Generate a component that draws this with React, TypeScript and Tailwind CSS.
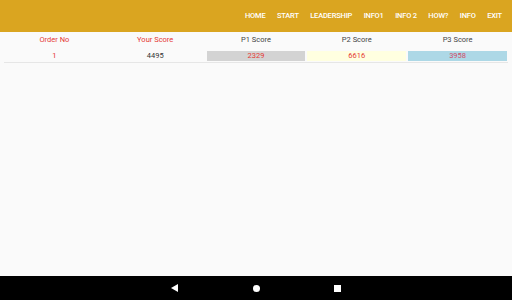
export default function App() {
  const links = ["HOME", "START", "LEADERSHIP", "INFO1", "INFO 2", "HOW?", "INFO", "EXIT"]

  return (
    <div className="w-[512px] h-[300px] flex flex-col bg-[#fafafa] overflow-hidden" style={{ fontFamily: "Roboto, 'Liberation Sans', sans-serif" }}>
      {/* App bar */}
      <header className="h-[32px] bg-[#daa520] flex items-center justify-end pr-[10px] gap-[11.5px] shrink-0">
        {links.map(l => (
          <span key={l} className="text-white text-[7.5px] font-medium tracking-[-0.2px]">
            {l}
          </span>
        ))}
      </header>

      {/* Score table */}
      <main className="flex-1 px-[4px]">
        <div className="grid grid-cols-5 text-[7.5px] text-center">
          <div className="h-[16px] flex items-center justify-center text-[#e53935]">Order No</div>
          <div className="h-[16px] flex items-center justify-center text-[#e53935]">Your Score</div>
          <div className="h-[16px] flex items-center justify-center text-[#444]">P1 Score</div>
          <div className="h-[16px] flex items-center justify-center text-[#444]">P2 Score</div>
          <div className="h-[16px] flex items-center justify-center text-[#444]">P3 Score</div>
        </div>
        <div className="grid grid-cols-5 text-[7.5px] text-center border-b border-[#e6e6e6] pt-[3px] pb-[1px]">
          <div className="h-[10px] flex items-center justify-center text-[#e53935]">1</div>
          <div className="h-[10px] flex items-center justify-center text-[#333]">4495</div>
          <div className="h-[10px] flex items-center justify-center text-[#e53935] bg-[#d3d3d3] mx-[1px]">2329</div>
          <div className="h-[10px] flex items-center justify-center text-[#e53935] bg-[#ffffe0] mx-[1px]">6616</div>
          <div className="h-[10px] flex items-center justify-center text-[#d24b6a] bg-[#add8e6] mx-[1px]">3958</div>
        </div>
      </main>

      {/* Android nav bar */}
      <nav className="h-[24px] bg-black flex items-center justify-center gap-[74px] shrink-0">
        <svg width="8" height="8" viewBox="0 0 8 8">
          <polygon points="7,0 7,8 0,4" fill="white" />
        </svg>
        <div className="w-[7px] h-[7px] rounded-full bg-white" />
        <div className="w-[7px] h-[7px] bg-white" />
      </nav>
    </div>
  )
}
